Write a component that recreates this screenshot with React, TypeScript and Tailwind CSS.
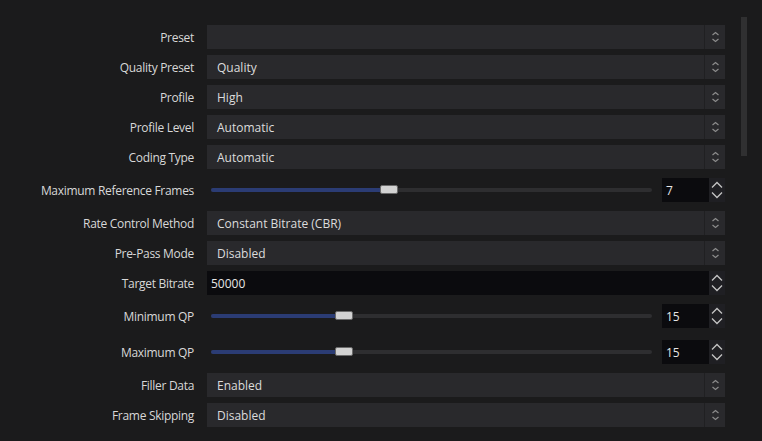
import React from 'react'

type Row =
  | { kind: 'select'; label: string; value: string }
  | { kind: 'slider'; label: string; value: number; min: number; max: number }
  | { kind: 'input'; label: string; value: string }

const rows: Row[] = [
  { kind: 'select', label: 'Preset', value: '' },
  { kind: 'select', label: 'Quality Preset', value: 'Quality' },
  { kind: 'select', label: 'Profile', value: 'High' },
  { kind: 'select', label: 'Profile Level', value: 'Automatic' },
  { kind: 'select', label: 'Coding Type', value: 'Automatic' },
  { kind: 'slider', label: 'Maximum Reference Frames', value: 7, min: 1, max: 16 },
  { kind: 'select', label: 'Rate Control Method', value: 'Constant Bitrate (CBR)' },
  { kind: 'select', label: 'Pre-Pass Mode', value: 'Disabled' },
  { kind: 'input', label: 'Target Bitrate', value: '50000' },
  { kind: 'slider', label: 'Minimum QP', value: 15, min: 0, max: 51 },
  { kind: 'slider', label: 'Maximum QP', value: 15, min: 0, max: 51 },
  { kind: 'select', label: 'Filler Data', value: 'Enabled' },
  { kind: 'select', label: 'Frame Skipping', value: 'Disabled' },
]

function SmallArrows() {
  return (
    <svg width="9" height="12" viewBox="0 0 9 12" fill="none" stroke="#8c8c8c" strokeWidth="1.2">
      <path d="M1.5 4 L4.5 1.5 L7.5 4" />
      <path d="M1.5 8 L4.5 10.5 L7.5 8" />
    </svg>
  )
}

function SpinArrows() {
  return (
    <div className="flex w-[16px] flex-col items-center justify-center gap-[2px] bg-[#1f1f23]">
      <svg width="12" height="8" viewBox="0 0 12 8" fill="none" stroke="#c4c4c4" strokeWidth="1.3">
        <path d="M1 6.5 L6 1.5 L11 6.5" />
      </svg>
      <svg width="12" height="8" viewBox="0 0 12 8" fill="none" stroke="#c4c4c4" strokeWidth="1.3">
        <path d="M1 1.5 L6 6.5 L11 1.5" />
      </svg>
    </div>
  )
}

function Select({ value }: { value: string }) {
  return (
    <div className="flex h-[24px] flex-1 items-center bg-[#29292c]">
      <span className="flex-1 pl-[10px] pt-[2px] text-[#dcdcdc]">{value}</span>
      <div className="flex h-full w-[21px] items-center justify-center border-l border-[#202022]">
        <SmallArrows />
      </div>
    </div>
  )
}

function Slider({ value, min, max }: { value: number; min: number; max: number }) {
  const pct = (value - min) / (max - min)
  const handleLeft = pct * (441 - 18)
  return (
    <div className="flex h-[24px] flex-1 items-center">
      <div className="ml-[4px] w-[441px]">
        <div className="relative h-[4px] rounded-[2px] bg-[#2e2e30]">
          <div className="h-full rounded-l-[2px] bg-[#2b3c74]" style={{ width: handleLeft + 4 }} />
          <div
            className="absolute top-[-3px] h-[9px] w-[18px] rounded-[2px] border border-[#6a6a6a] bg-[#d2d2d2]"
            style={{ left: handleLeft }}
          />
        </div>
      </div>
      <div className="ml-[10px] flex h-full">
        <div className="flex w-[47px] items-center bg-[#0b0b0e] pl-[4px] pt-[2px] text-[#e6e6e6]">{value}</div>
        <SpinArrows />
      </div>
    </div>
  )
}

function Input({ value }: { value: string }) {
  return (
    <div className="flex h-[24px] flex-1">
      <div className="flex flex-1 items-center bg-[#0b0b0e] pl-[4px] pt-[2px] text-[#e6e6e6]">{value}</div>
      <SpinArrows />
    </div>
  )
}

export default function App() {
  return (
    <div
      className="flex h-[441px] w-[762px] overflow-hidden bg-[#1b1b1c] text-[12px] text-[#d8d8d8]"
      style={{ fontFamily: '"Open Sans", "Noto Sans", sans-serif' }}
    >
      <div className="flex w-[725px] flex-col gap-[6px] pt-[25px]">
        {rows.map((row) => (
          <div key={row.label} className={`flex items-center ${row.kind === 'slider' ? 'my-[3px]' : ''}`}>
            <div className="w-[207px] shrink-0 pr-[13px] pt-[2px] text-right tracking-[-0.3px]">{row.label}</div>
            {row.kind === 'select' && <Select value={row.value} />}
            {row.kind === 'slider' && <Slider value={row.value} min={row.min} max={row.max} />}
            {row.kind === 'input' && <Input value={row.value} />}
          </div>
        ))}
      </div>
      <div className="ml-[16px] mt-[17px] h-[139px] w-[6px] bg-[#303031]" />
    </div>
  )
}
